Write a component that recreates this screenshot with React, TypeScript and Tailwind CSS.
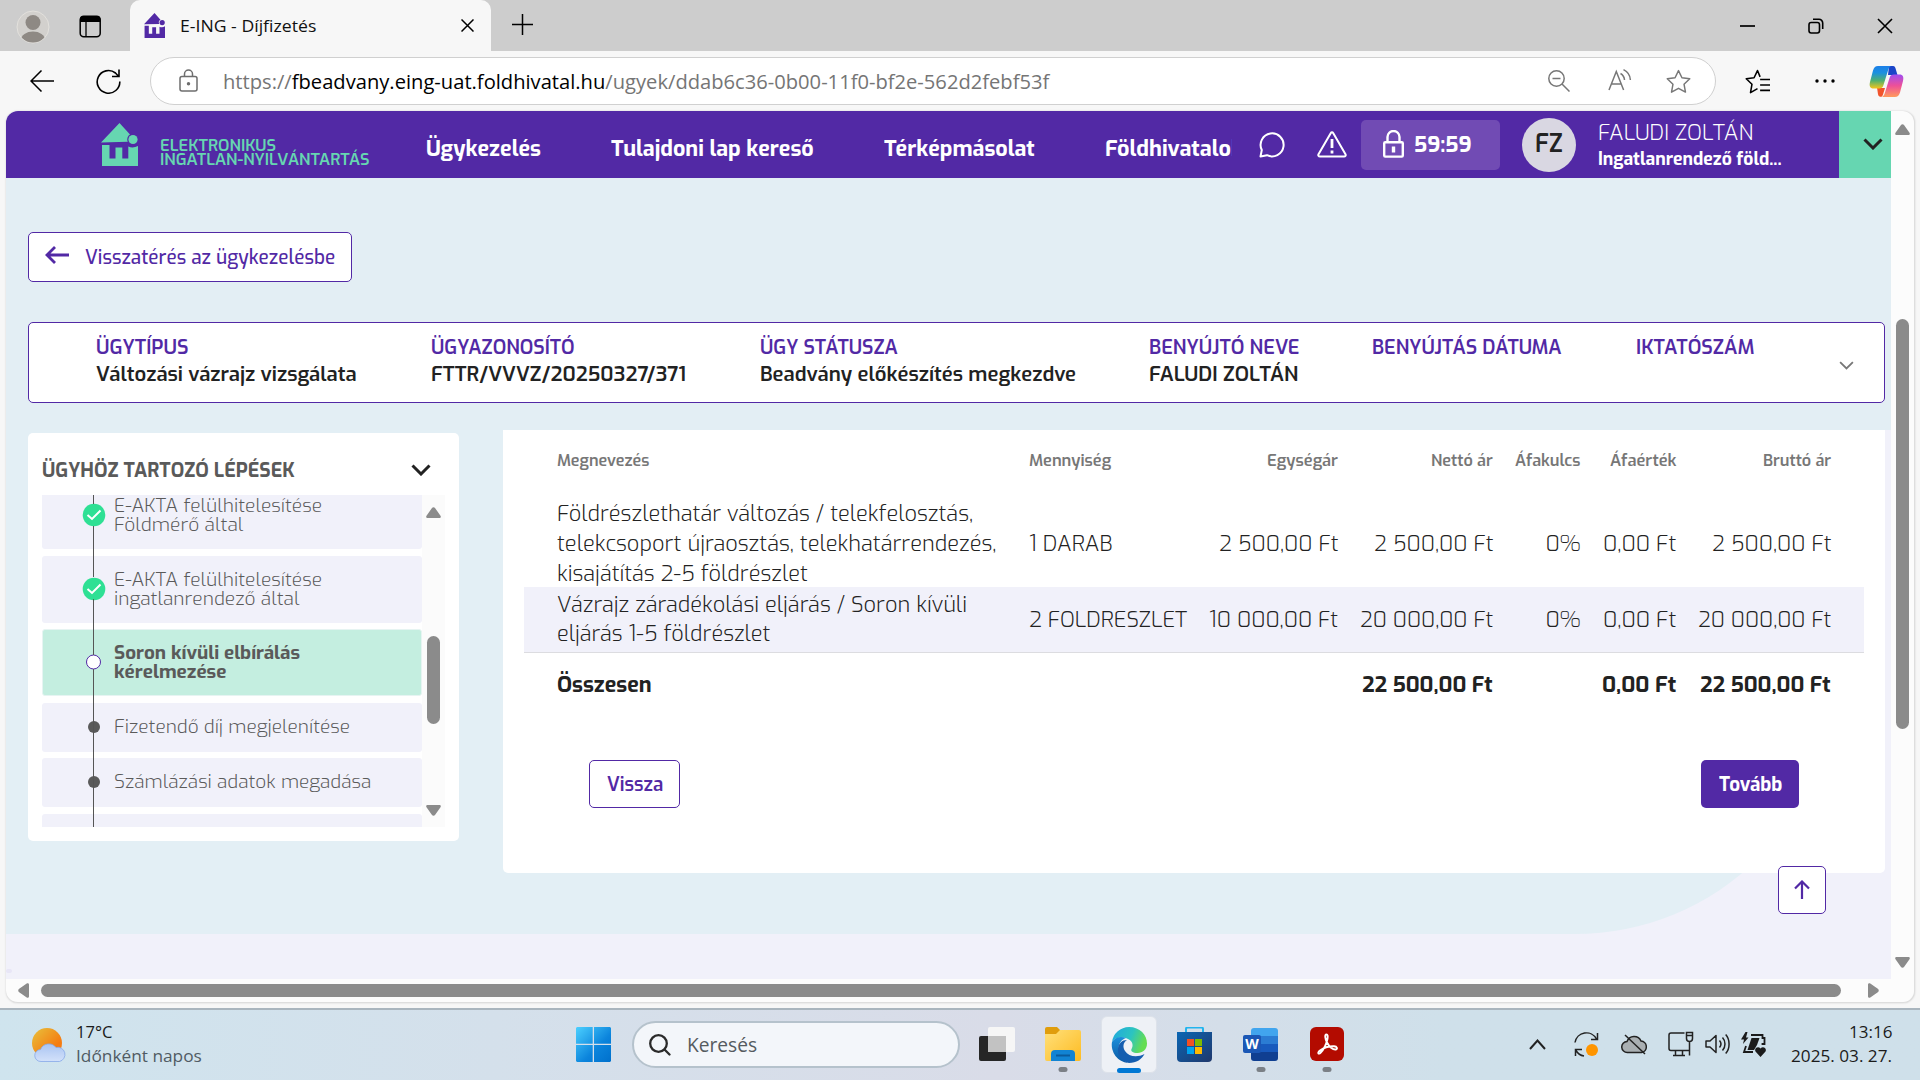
import { useLayoutEffect, useRef, useState } from "react";
import type { ReactNode } from "react";

/* Condenses or widens a line of text so that it fills the width of its box. */
function Fit({ className, children }: { className: string; children: ReactNode }) {
  const outer = useRef<HTMLSpanElement>(null);
  const inner = useRef<HTMLSpanElement>(null);
  const [scale, setScale] = useState(1);
  useLayoutEffect(() => {
    if (outer.current && inner.current) {
      setScale(outer.current.clientWidth / inner.current.offsetWidth);
    }
  }, []);
  return (
    <span ref={outer} className={`block shrink-0 whitespace-nowrap ${className}`}>
      <span ref={inner} className="inline-block origin-left align-top" style={{ transform: `scaleX(${scale})` }}>
        {children}
      </span>
    </span>
  );
}

function HouseLogo({ className }: { className: string }) {
  return (
    <svg className={className} viewBox="0 0 37 43" fill="currentColor" preserveAspectRatio="none">
      <path d="M0 19.500 18.500 0 29 11.500a5.600 5.600 0 0 0-2.200 7.300L0 19.500Z" />
      <circle cx="32" cy="16.500" r="4.600" />
      <path d="M1 22h7.500v13.500h6V24.500h6.800v11h6V23.500c3 1.500 6.500 1.200 9.700-.5V43H1Z" />
    </svg>
  );
}

function Chevron({ className, width = 2 }: { className: string; width?: number }) {
  return (
    <svg className={className} viewBox="0 0 20 12" fill="none" stroke="currentColor" strokeWidth={width}>
      <path d="m1.500 1.500 8.500 8.500 8.500-8.500" />
    </svg>
  );
}

function TabStrip() {
  return (
    <div className="flex h-[51px] shrink-0 bg-[#cdcdcd]">
      <div className="flex w-[130px] items-center pl-4">
        <svg className="mt-0.5 size-[34px]" viewBox="0 0 34 34">
          <defs>
            <clipPath id="face"><circle cx="17" cy="17" r="15.500" /></clipPath>
          </defs>
          <circle cx="17" cy="17" r="16" fill="#d2d0cd" stroke="#e3e1dd" />
          <g clipPath="url(#face)" fill="#8e8984">
            <circle cx="17" cy="12.500" r="7.500" />
            <ellipse cx="17" cy="30" rx="12" ry="8.500" />
          </g>
        </svg>
        <svg className="ml-[29px] mt-px h-[23px] w-[23px]" viewBox="0 0 23 23">
          <rect x="1.200" y="1.200" width="20" height="20.500" rx="3.500" fill="none" stroke="#000" strokeWidth="1.500" />
          <path d="M1 7V4a3 3 0 0 1 3-3h14.500a3 3 0 0 1 3 3v3Z" />
          <path d="M7 7v14" stroke="#000" strokeWidth="1.300" />
        </svg>
      </div>
      <div className="flex w-[361px] items-center rounded-t-[10px] bg-[#f7f7f7] pl-3.5">
        <HouseLogo className="h-[25px] w-[21px] text-[#5229a5]" />
        <Fit className="ml-[15px] w-[136px] text-[17px] leading-6 text-[#111]">E-ING - Díjfizetés</Fit>
        <svg className="ml-[145px] size-[13px]" viewBox="0 0 13 13" stroke="#000" strokeWidth="1.500">
          <path d="m.500.500 12 12M12.500.500l-12 12" />
        </svg>
      </div>
      <svg className="ml-[21px] mt-[14px] size-[21px]" viewBox="0 0 21 21" stroke="#000" strokeWidth="1.500">
        <path d="M10.500 0v21M0 10.500h21" />
      </svg>
      <div className="ml-auto flex items-center gap-[53px] pr-[27px]">
        <svg className="size-4" viewBox="0 0 16 16" stroke="#000" strokeWidth="1.700"><path d="M1 8h15" /></svg>
        <svg className="size-4" viewBox="0 0 16 16" fill="none" stroke="#000" strokeWidth="1.600">
          <rect x="1" y="4.500" width="10.500" height="10.500" rx="2.200" />
          <path d="M5 1.300h6a3.700 3.700 0 0 1 3.700 3.700v6" />
        </svg>
        <svg className="size-4" viewBox="0 0 16 16" stroke="#000" strokeWidth="1.600"><path d="m1 1 14 14M15 1 1 15" /></svg>
      </div>
    </div>
  );
}

const STAR = "m12 1.500 3.300 6.900 7.500 1-5.500 5.200 1.400 7.600-6.700-3.700-6.700 3.700 1.400-7.600L1.200 9.400l7.500-1Z";

function Toolbar() {
  return (
    <div className="flex h-[60px] shrink-0 items-center bg-[#f7f7f7]">
      <svg className="ml-[30px] h-[22px] w-6" viewBox="0 0 24 22" fill="none" stroke="#000" strokeWidth="1.500">
        <path d="M11.500.500 1 11l10.500 10.500M1 11h23" />
      </svg>
      <svg className="ml-[42px] size-[25px]" viewBox="0 0 25 25" fill="none" stroke="#000" strokeWidth="1.600">
        <path d="M23.800 12.500A11.300 11.300 0 1 1 19.500 4L22.500 7.200M23 .5v7h-7" />
      </svg>
      <div className="ml-[29px] flex h-12 w-[1566px] items-center rounded-full border-[1.500px] border-[#d0d0d0] bg-white text-[#757575]">
        <svg className="-mt-0.5 ml-7 h-[23px] w-[19px]" viewBox="0 0 19 23" fill="none" stroke="#6e6e6e" strokeWidth="1.500">
          <rect x="1" y="7.500" width="17" height="14.500" rx="2" />
          <path d="M5.500 7.500V5a4 4 0 0 1 8 0v2.500" />
          <circle cx="9.500" cy="14.700" r="1" fill="#6e6e6e" />
        </svg>
        <Fit className="ml-[25px] mt-0.5 w-[826px] text-[20px] leading-7">
          https://<span className="text-black">fbeadvany.eing-uat.foldhivatal.hu</span>/ugyek/ddab6c36-0b00-11f0-bf2e-562d2febf53f
        </Fit>
        <svg className="ml-[499px] size-[22px]" viewBox="0 0 22 22" fill="none" stroke="#777" strokeWidth="1.500">
          <circle cx="8.500" cy="8.500" r="7.700" />
          <path d="m14 14 7.500 7.500M4.500 8.500h8" />
        </svg>
        <svg className="ml-[38px] -mt-0.5 h-[22px] w-6" viewBox="0 0 24 22" fill="none" stroke="#777" strokeWidth="1.500">
          <path d="M1 21 8.300 2.500 15.600 21M3.500 15h9.600M12.500 4.500c2.200 1.200 3.800 3.700 4 6.500M15.500.700c4 2 6.700 6 6.900 10.300" />
        </svg>
        <svg className="ml-[34px] size-[25px]" viewBox="0 0 24 24" fill="none" stroke="#777" strokeWidth="1.400" strokeLinejoin="round">
          <path d={STAR} />
        </svg>
      </div>
      <svg className="ml-[29px] size-[25px]" viewBox="0 0 24 24" fill="none" stroke="#000" strokeWidth="1.500" strokeLinejoin="round">
        <path d="M14.500 7.600 12 1.500 8.700 8.400l-7.500 1 5.500 5.200-1.400 8.100 6.700-3.900M14.500 10H24M14.500 15.300H24M14.500 20.500H24" />
      </svg>
      <svg className="ml-[44px] h-1.5 w-[22px]" viewBox="0 0 22 6"><circle cx="3" cy="3" r="1.700" /><circle cx="11" cy="3" r="1.700" /><circle cx="19" cy="3" r="1.700" /></svg>
      <svg className="ml-[33px] h-[31px] w-[35px]" viewBox="0 0 35 31">
        <defs>
          <linearGradient id="cp1" x1="0" y1="0" x2="0" y2="1"><stop offset="0" stopColor="#1d7fe8" /><stop offset=".3" stopColor="#1a90e0" /><stop offset=".65" stopColor="#4fb070" /><stop offset="1" stopColor="#f5c51a" /></linearGradient>
          <linearGradient id="cp2" x1="0" y1="0" x2="0" y2="1"><stop offset="0" stopColor="#a04df0" /><stop offset=".5" stopColor="#ee5098" /><stop offset="1" stopColor="#ff9b5c" /></linearGradient>
        </defs>
        <path d="M20 0h4c2 0 2.500 2 3 4l1.500 5H19Z" fill="#1b45c8" />
        <path d="M8 22h8l-2 6.500C13.300 31 12 31 10.500 30.500 8.500 29.700 9 26 8 22Z" fill="#f2542c" />
        <path d="M9 0h13c-2 1-2.600 3-3.300 5.500L14.500 19c-.8 2.600-2 3.500-4.500 3.500H4.500C1 22.500 0 20 1 16L4 4.500C5 1.300 6.500 0 9 0Z" fill="url(#cp1)" />
        <path d="M26 31H13c2-1 2.600-3 3.300-5.500L20.500 12c.8-2.600 2-3.500 4.500-3.500h5.500c3.500 0 4.500 2.500 3.500 6.500L31 26.500c-1 3.200-2.500 4.500-5 4.500Z" fill="url(#cp2)" />
      </svg>
    </div>
  );
}

function SiteHeader() {
  return (
    <div className="flex h-[67px] items-center bg-[#5229a5] text-white">
      <HouseLogo className="ml-[95px] h-[43px] w-[37px] text-[#66d6b1]" />
      <div className="ml-[22px] mt-[14px] text-[16.500px] font-semibold leading-[14px] text-[#66d6b1]">
        <Fit className="w-[116px]">ELEKTRONIKUS</Fit>
        <Fit className="w-[210px]">INGATLAN-NYILVÁNTARTÁS</Fit>
      </div>
      <div className="ml-[56px] mt-[9px] flex w-[806px] overflow-hidden text-[22px] font-bold leading-8">
        <Fit className="w-[115px]">Ügykezelés</Fit>
        <Fit className="ml-[70px] w-[203px]">Tulajdoni lap kereső</Fit>
        <Fit className="ml-[70px] w-[151px]">Térképmásolat</Fit>
        <Fit className="ml-[70px] w-[138px]">Földhivatalok</Fit>
      </div>
      <svg className="ml-[27px] size-[27px]" viewBox="0 0 27 27" fill="none" stroke="currentColor" strokeWidth="2" strokeLinejoin="round">
        <path d="M1.500 25.500 2.800 19A11.500 11.500 0 1 1 8 24.200Z" />
      </svg>
      <svg className="ml-[31px] h-[27px] w-[30px]" viewBox="0 0 30 27" fill="none" stroke="currentColor" strokeWidth="2" strokeLinejoin="round">
        <path d="M13.700 2.200 1.500 23.200c-.6 1.200 0 2.300 1.500 2.300h24c1.500 0 2.100-1.100 1.500-2.300L16.300 2.200c-.7-1.200-1.900-1.200-2.600 0Z" />
        <path d="M15 8v9M15 19.500v3" strokeWidth="2.800" />
      </svg>
      <div className="ml-[14px] flex h-[50px] w-[139px] items-center rounded-[5px] bg-[#714bb4] pl-[22px]">
        <svg className="-mt-px h-[28px] w-[21px]" viewBox="0 0 21 28" fill="none" stroke="currentColor" strokeWidth="2.400">
          <rect x="1.200" y="12.200" width="18.600" height="14.400" rx="1" />
          <path d="M4.500 12V7a6 6 0 0 1 12 0v5" />
          <path d="M10.500 16.500v6" strokeWidth="3.400" />
        </svg>
        <Fit className="ml-[10px] w-[58px] text-[22px] font-bold leading-8">59:59</Fit>
      </div>
      <div className="ml-[22px] flex size-[54px] items-center justify-center rounded-full bg-[#d9d7e2] text-[#222]">
        <Fit className="-mt-px w-[28px] text-[25px] font-semibold leading-8">FZ</Fit>
      </div>
      <div className="ml-[22px] mt-0.5 flex w-[241px] flex-col">
        <Fit className="w-[155px] text-[21.800px] font-[350] leading-[26px]">FALUDI ZOLTÁN</Fit>
        <Fit className="w-[184px] text-[18px] font-bold leading-[26px]">Ingatlanrendező föld...</Fit>
      </div>
      <div className="flex h-full w-[52px] items-center justify-center bg-[#66d6b1] pl-[15px] text-[#222]">
        <Chevron className="-mt-0.5 h-3 w-5" width={3} />
      </div>
    </div>
  );
}

type InfoItem = { label: string; value?: string; col: string; labelWidth: string; valueWidth: string };

const INFO: InfoItem[] = [
  { label: "ÜGYTÍPUS", value: "Változási vázrajz vizsgálata", col: "w-[335px]", labelWidth: "w-[92px]", valueWidth: "w-[261px]" },
  { label: "ÜGYAZONOSÍTÓ", value: "FTTR/VVVZ/20250327/371", col: "w-[329px]", labelWidth: "w-[144px]", valueWidth: "w-[255px]" },
  { label: "ÜGY STÁTUSZA", value: "Beadvány előkészítés megkezdve", col: "w-[389px]", labelWidth: "w-[138px]", valueWidth: "w-[316px]" },
  { label: "BENYÚJTÓ NEVE", value: "FALUDI ZOLTÁN", col: "w-[223px]", labelWidth: "w-[150px]", valueWidth: "w-[149px]" },
  { label: "BENYÚJTÁS DÁTUMA", col: "w-[264px]", labelWidth: "w-[190px]", valueWidth: "" },
  { label: "IKTATÓSZÁM", col: "w-[203px]", labelWidth: "w-[118px]", valueWidth: "" },
];

function InfoBar() {
  return (
    <div className="ml-[22px] mt-10 flex h-[81px] w-[1857px] rounded-[5px] border border-[#5229a5] bg-white pl-[67px] pt-[11px]">
      {INFO.map((item) => (
        <div key={item.label} className={`shrink-0 ${item.col}`}>
          <Fit className={`text-[19.500px] font-semibold leading-[26px] text-[#5229a5] ${item.labelWidth}`}>{item.label}</Fit>
          {item.value && (
            <Fit className={`mt-px text-[20.400px] font-semibold leading-[27px] text-[#222] ${item.valueWidth}`}>{item.value}</Fit>
          )}
        </div>
      ))}
      <Chevron className="mt-[27px] h-[9px] w-[15px] text-[#777]" width={2.4} />
    </div>
  );
}

function ArrowHead({ className }: { className: string }) {
  return (
    <svg className={className} viewBox="0 0 15 11" fill="#8b8b8b">
      <path d="M5.800 1.200 .5 8.700C-.2 9.900.300 11 1.700 11h11.600c1.400 0 1.900-1.100 1.200-2.300L9.200 1.200c-.9-1.300-2.500-1.300-3.400 0Z" />
    </svg>
  );
}

type Step = { state: "done" | "current" | "todo"; box: string; lines: { text: string; width: string }[] };

const STEPS: Step[] = [
  {
    state: "done",
    box: "h-[67px] -mt-[13px] bg-[#f1f1fa]",
    lines: [
      { text: "E-AKTA felülhitelesítése", width: "w-[208px]" },
      { text: "Földmérő által", width: "w-[129px]" },
    ],
  },
  {
    state: "done",
    box: "h-[67px] mt-[7px] bg-[#f1f1fa]",
    lines: [
      { text: "E-AKTA felülhitelesítése", width: "w-[208px]" },
      { text: "ingatlanrendező által", width: "w-[185px]" },
    ],
  },
  {
    state: "current",
    box: "h-[67px] mt-[6px] border border-[#e6f4f2] bg-[#c4eee0]",
    lines: [
      { text: "Soron kívüli elbírálás", width: "w-[186px]" },
      { text: "kérelmezése", width: "w-[112px]" },
    ],
  },
  { state: "todo", box: "h-[49px] mt-[7px] bg-[#f1f1fa]", lines: [{ text: "Fizetendő díj megjelenítése", width: "w-[236px]" }] },
  { state: "todo", box: "h-[49px] mt-[6px] bg-[#f1f1fa]", lines: [{ text: "Számlázási adatok megadása", width: "w-[257px]" }] },
];

function StepMark({ state }: { state: Step["state"] }) {
  return (
    <svg className="-mt-px size-6 shrink-0" viewBox="0 0 24 24">
      {state === "done" && (
        <>
          <circle cx="12" cy="12" r="11.300" fill="#2ee094" />
          <path d="m5.500 12 4.500 4 8.500-8.500" fill="none" stroke="#fff" strokeWidth="2" />
        </>
      )}
      {state === "current" && <circle cx="10.500" cy="12" r="7" fill="#fff" stroke="#5229a5" />}
      {state === "todo" && <circle cx="12" cy="12" r="6" fill="#5a5a5a" />}
    </svg>
  );
}

function Sidebar() {
  return (
    <div className="ml-[22px] mt-[3px] h-[408px] w-[431px] shrink-0 rounded-[5px] bg-white pl-[14px] pt-[29px]">
      <div className="flex h-[33px]">
        <Fit className="-mt-1.5 w-[253px] text-[19.300px] font-bold leading-[30px] text-[#5a5a5a]">ÜGYHÖZ TARTOZÓ LÉPÉSEK</Fit>
        <Chevron className="ml-[116px] mt-0.5 h-3 w-5 text-[#222]" width={3} />
      </div>
      <div className="flex h-[332px] w-[403px] overflow-hidden">
        <div className="relative w-[380px]">
          {STEPS.map((step, i) => (
            <div key={i} className={`flex items-center rounded-[3px] pl-10 ${step.box}`}>
              <StepMark state={step.state} />
              <div
                className={`-mt-[2px] text-[19px] leading-[19px] text-[#5a5a5a] ${
                  step.state === "current" ? "ml-[7px] font-bold" : "ml-2 font-[350]"
                }`}
              >
                {step.lines.map((line) => (
                  <Fit key={line.text} className={line.width}>{line.text}</Fit>
                ))}
              </div>
            </div>
          ))}
          <div className="mt-[7px] h-[30px] rounded-[3px] bg-[#f1f1fa]" />
          {/* Connecting line between the step marks */}
          <div className="absolute left-[51px] top-[-13px] h-[22px] w-px bg-[#555]" />
          <div className="absolute left-[51px] top-[31px] h-[51px] w-px bg-[#555]" />
          <div className="absolute left-[51px] top-[104px] h-[56px] w-px bg-[#555]" />
          <div className="absolute left-[51px] top-[174px] h-[161px] w-px bg-[#555]" />
        </div>
        <div className="flex w-[23px] flex-col items-center bg-[#fbfbfb] pt-3">
          <ArrowHead className="h-[11px] w-[15px]" />
          <div className="mt-[118px] h-[88px] w-[13px] rounded-full bg-[#8b8b8b]" />
          <ArrowHead className="mt-[81px] h-[11px] w-[15px] rotate-180" />
        </div>
      </div>
    </div>
  );
}

const COLS = "grid grid-cols-[472px_180px_128.5px_155.5px_87.5px_95.5px_155px] pl-[33px]";

const HEADS = [
  { text: "Megnevezés", cls: "w-[92px]" },
  { text: "Mennyiség", cls: "w-[82px]" },
  { text: "Egységár", cls: "w-[71px] ml-auto" },
  { text: "Nettó ár", cls: "w-[62px] ml-auto" },
  { text: "Áfakulcs", cls: "w-[66px] ml-auto" },
  { text: "Áfaérték", cls: "w-[66px] ml-auto" },
  { text: "Bruttó ár", cls: "w-[68px] ml-auto" },
];

function FeeTable() {
  return (
    <div className="w-[1340px] text-[21.800px] font-[350] leading-[30px] text-[#222]">
      <div className={`${COLS} h-[67px] pt-[17px] text-[16px] font-semibold leading-7 text-[#777]`}>
        {HEADS.map((h) => (
          <Fit key={h.text} className={h.cls}>{h.text}</Fit>
        ))}
      </div>
      <div className={`${COLS} h-[90px] items-center pt-0.5`}>
        <div>
          <Fit className="w-[416px]">Földrészlethatár változás / telekfelosztás,</Fit>
          <Fit className="w-[439px]">telekcsoport újraosztás, telekhatárrendezés,</Fit>
          <Fit className="w-[251px]">kisajátítás 2-5 földrészlet</Fit>
        </div>
        <Fit className="w-[83px]">1 DARAB</Fit>
        <Fit className="ml-auto w-[119px]">2 500,00 Ft</Fit>
        <Fit className="ml-auto w-[119px]">2 500,00 Ft</Fit>
        <Fit className="ml-auto w-[35px]">0%</Fit>
        <Fit className="ml-auto w-[73px]">0,00 Ft</Fit>
        <Fit className="ml-auto w-[119px]">2 500,00 Ft</Fit>
      </div>
      <div className={`${COLS} h-[66px] items-center border-b border-[#dcdce0] bg-[#f1f1fa]`}>
        <div className="-mt-0.5 leading-[29px]">
          <Fit className="w-[410px]">Vázrajz záradékolási eljárás / Soron kívüli</Fit>
          <Fit className="w-[213px]">eljárás 1-5 földrészlet</Fit>
        </div>
        <Fit className="w-[158px]">2 FOLDRESZLET</Fit>
        <Fit className="ml-auto w-[129px]">10 000,00 Ft</Fit>
        <Fit className="ml-auto w-[133px]">20 000,00 Ft</Fit>
        <Fit className="ml-auto w-[35px]">0%</Fit>
        <Fit className="ml-auto w-[73px]">0,00 Ft</Fit>
        <Fit className="ml-auto w-[133px]">20 000,00 Ft</Fit>
      </div>
      <div className={`${COLS} h-[62px] items-center pt-0.5 font-bold`}>
        <Fit className="w-[95px]">Összesen</Fit>
        <span />
        <span />
        <Fit className="ml-auto w-[131px]">22 500,00 Ft</Fit>
        <span />
        <Fit className="ml-auto w-[74px]">0,00 Ft</Fit>
        <Fit className="ml-auto w-[131px]">22 500,00 Ft</Fit>
      </div>
    </div>
  );
}

function MainCard() {
  return (
    <div className="ml-[44px] h-[443px] w-[1382px] shrink-0 rounded-b-[5px] bg-white pl-[21px]">
      <FeeTable />
      <div className="mt-[45px] flex justify-between pl-[65px] pr-[86px] text-[19.500px] leading-[30px]">
        <div className="flex h-12 w-[91px] items-center justify-center rounded-[5px] border border-[#5229a5] font-semibold text-[#5229a5]">
          <Fit className="-mt-px w-[56px]">Vissza</Fit>
        </div>
        <div className="flex h-12 w-[98px] items-center justify-center rounded-[5px] bg-[#5229a5] font-bold text-white">
          <Fit className="-mt-px w-[63px]">Tovább</Fit>
        </div>
      </div>
    </div>
  );
}

function Page() {
  return (
    <div className="relative isolate h-[868px] w-[1885px] overflow-hidden bg-[#f1f1fa] font-['Exo','Exo_2',Roboto,sans-serif]">
      {/* Tinted backdrop with a rounded lower corner */}
      <div className="absolute left-0 top-0 -z-10 h-[319px] w-full bg-[#e3eef4]" />
      <div className="absolute left-0 top-[319px] -z-10 h-[504px] w-[1829px] rounded-br-[260px] bg-[#e3eff5]" />
      <SiteHeader />
      <div className="ml-[22px] mt-[54px] flex h-[50px] w-[324px] items-center rounded-[5px] border border-[#5229a5] bg-white text-[#5229a5]">
        <svg className="-mt-1 ml-4 h-[18px] w-6" viewBox="0 0 24 18" fill="none" stroke="currentColor" strokeWidth="2.800">
          <path d="M10 1 2 9l8 8M2 9h22" />
        </svg>
        <Fit className="-mt-px ml-4 w-[250px] text-[19.500px] font-medium leading-7">Visszatérés az ügykezelésbe</Fit>
      </div>
      <InfoBar />
      <div className="mt-[27px] flex items-start">
        <Sidebar />
        <MainCard />
      </div>
      <div className="absolute left-[1772px] top-[755px] flex size-12 items-center justify-center rounded-[5px] border border-[#5229a5] bg-white">
        <svg className="-mt-0.5 h-[19px] w-4" viewBox="0 0 16 19" fill="none" stroke="#5229a5" strokeWidth="2.200">
          <path d="m1 8.500 7-7 7 7M8 2v17" />
        </svg>
      </div>
      <div className="absolute left-0 top-[858px] h-1 w-1.5 rounded bg-[#e8e6f6]" />
    </div>
  );
}

function Viewport() {
  return (
    <div className="ml-[6px] h-[892px] w-[1909px] overflow-hidden rounded-[12px] border-b border-r border-[#dedede] bg-[#fcfcfc] shadow-[0_0_2px_#ccc]">
      <div className="flex">
        <Page />
        <div className="flex w-[23px] flex-col items-center pt-[13px]">
          <ArrowHead className="h-[11px] w-[15px]" />
          <div className="mt-[184px] h-[410px] w-[13px] rounded-full bg-[#8b8b8b]" />
          <ArrowHead className="mt-[228px] h-[11px] w-[15px] rotate-180" />
        </div>
      </div>
      <div className="flex h-[23px] items-center pl-2.5">
        <ArrowHead className="h-[11px] w-[15px] -rotate-90" />
        <div className="ml-2.5 h-[13px] w-[1800px] rounded-full bg-[#8b8b8b]" />
        <ArrowHead className="ml-[25px] h-[11px] w-[15px] rotate-90" />
      </div>
    </div>
  );
}

function RunDot() {
  return <div className="absolute -bottom-[11px] left-1/2 h-[5px] w-[9px] -translate-x-1/2 rounded-full bg-[#7b8086]" />;
}

function Taskbar() {
  return (
    <div className="flex h-[72px] shrink-0 items-center border-t-2 border-[#a9b5be] bg-linear-to-r from-[#cfe4ee] via-[#d9dce8] via-52% to-[#cfe0ea] to-75% text-[#1b1b1b]">
      <svg className="ml-8 h-[34px] w-[34px]" viewBox="0 0 34 34">
        <defs>
          <linearGradient id="sun" x1="0" y1="0" x2="1" y2="1"><stop offset="0" stopColor="#e8c23c" /><stop offset=".7" stopColor="#f57c12" /></linearGradient>
          <linearGradient id="cl" x1="0" y1="0" x2="0" y2="1"><stop offset="0" stopColor="#a9c4f2" /><stop offset="1" stopColor="#d3e1fa" /></linearGradient>
        </defs>
        <circle cx="15" cy="15" r="15" fill="url(#sun)" />
        <path d="M9 33.500a6 6 0 0 1-.5-12 9 9 0 0 1 15.500-2 7 7 0 1 1 3.500 14Z" fill="url(#cl)" stroke="#86a8e8" strokeWidth=".8" />
      </svg>
      <div className="-mt-0.5 ml-2.5 text-[17px] leading-6">
        <Fit className="w-[36px]">17°C</Fit>
        <Fit className="w-[126px] text-[#505b63]">Időnként napos</Fit>
      </div>
      <svg className="-mt-px ml-[374px] size-[35px]" viewBox="0 0 35 35">
        <defs><linearGradient id="win" gradientUnits="userSpaceOnUse" x1="0" y1="0" x2="35" y2="35"><stop offset="0" stopColor="#4cd0ff" /><stop offset=".6" stopColor="#0b84dc" /><stop offset="1" stopColor="#0070cc" /></linearGradient></defs>
        <path d="M1 0h15.700v16.700H0V1ZM18 0h16l1 1v15.700H18ZM0 18h16.700v17H1l-1-1ZM18 18h17v16l-1 1H18Z" fill="url(#win)" />
      </svg>
      <div className="-mt-px ml-[21px] flex h-[47px] w-[328px] items-center rounded-full border-2 border-[#b5c2cc] bg-[#f3f6fa]">
        <svg className="ml-[15px] size-[22px]" viewBox="0 0 22 22" fill="none" stroke="#2a2a2a" strokeWidth="2.300" strokeLinecap="round">
          <circle cx="9.500" cy="9.500" r="8.300" /><path d="m15.500 15.500 5 5" />
        </svg>
        <Fit className="ml-[16px] w-[70px] text-[20px] leading-7 text-[#555b60]">Keresés</Fit>
      </div>
      <svg className="-mt-0.5 ml-[19px] h-[35px] w-9" viewBox="0 0 36 35">
        <rect x="0" y="9" width="27" height="25" rx="2" fill="#262626" />
        <rect x="9" y="0" width="27" height="25" rx="2" fill="#f6f6f6" />
        <path d="M9 9h18v16H9Z" fill="#c2c2c2" />
      </svg>
      <div className="relative -mt-0.5 ml-[30px]">
        <svg className="h-[34px] w-9" viewBox="0 0 36 34">
          <defs><linearGradient id="fol" x1="0" y1="0" x2="1" y2="1"><stop offset="0" stopColor="#ffe07a" /><stop offset="1" stopColor="#fdbb22" /></linearGradient></defs>
          <path d="M0 2a2 2 0 0 1 2-2h10l4 4-4 4H0Z" fill="#e09d0c" />
          <path d="M0 7h11l4-4h19a2 2 0 0 1 2 2v27a2 2 0 0 1-2 2H2a2 2 0 0 1-2-2Z" fill="url(#fol)" />
          <path d="M6 34V27a4 4 0 0 1 4-4h16a4 4 0 0 1 4 4v7Z" fill="#1183d3" />
          <path d="M11 28.500h14" stroke="#0b5a9c" strokeWidth="2" />
        </svg>
        <RunDot />
      </div>
      <div className="relative -mt-px ml-5 flex h-[57px] w-14 items-center justify-center rounded-md border border-[#dde2ea] bg-[#eef1f6]">
        <svg className="size-9" viewBox="0 0 36 36">
          <defs>
            <linearGradient id="e1" x1="0" y1="0" x2="1" y2=".3"><stop offset="0" stopColor="#1fa6e0" /><stop offset=".6" stopColor="#2cc4c0" /><stop offset="1" stopColor="#64dd52" /></linearGradient>
            <linearGradient id="e2" x1="0" y1="0" x2="0" y2="1"><stop offset="0" stopColor="#1b8fdc" /><stop offset="1" stopColor="#0c59a4" /></linearGradient>
          </defs>
          <path d="M1 15A17.500 17.500 0 0 1 18 0c11 0 18 8 18 16.500 0 6-4.500 9.500-9.500 9.500-5 0-7-2-6-4 1.700-2.500 2-7.500-3.500-10C10.500 9 3 11 1 15Z" fill="url(#e1)" />
          <path d="M1 15c3-5 9-6 14-4-5 1.500-7.500 6-7.500 11 0 6 3.500 11 9.500 13.900A18 18 0 0 1 1 15Z" fill="url(#e2)" />
          <path d="M16 13c-4 2.500-4.500 7-2 11 3.500 5.500 12 7 19.500 3C31 32 25.500 36 18 36 10.500 35 6 28 7 21c.8-4.500 4-8 9-8Z" fill="#155eb0" />
        </svg>
        <div className="absolute bottom-[-1px] h-[5px] w-6 rounded-full bg-[#0078d4]" />
      </div>
      <svg className="-mt-px ml-5 size-[35px]" viewBox="0 0 35 35">
        <defs><linearGradient id="st" x1="0" y1="0" x2="1" y2="1"><stop offset="0" stopColor="#0a66b4" /><stop offset="1" stopColor="#20386c" /></linearGradient></defs>
        <path d="M9 8V2a1.500 1.500 0 0 1 1.500-1.500h14A1.500 1.500 0 0 1 26 2v6" fill="none" stroke="#22b4ee" strokeWidth="2" />
        <path d="M0 5h35v26a4 4 0 0 1-4 4H4a4 4 0 0 1-4-4Z" fill="url(#st)" />
        <path d="M10 12h7v7h-7Z" fill="#f25022" /><path d="M18 12h7v7h-7Z" fill="#7fba00" />
        <path d="M10 20h7v7h-7Z" fill="#00a4ef" /><path d="M18 20h7v7h-7Z" fill="#ffb900" />
      </svg>
      <div className="relative -mt-0.5 ml-[31px] flex h-[33px] w-[35px] items-center">
        <div className="ml-2 h-full w-[27px] overflow-hidden rounded-[3px]">
          <div className="h-1/4 bg-[#41a5ee]" /><div className="h-1/4 bg-[#2b7cd3]" />
          <div className="h-1/4 bg-[#185abd]" /><div className="h-1/4 bg-[#103f91]" />
        </div>
        <div className="absolute left-0 top-[7px] flex h-[18px] w-[18px] items-center justify-center rounded-[2px] bg-[#1b57b5] text-[14px] font-bold leading-none text-white">W</div>
        <RunDot />
      </div>
      <div className="relative -mt-0.5 ml-8 flex size-[34px] items-center justify-center rounded-[6px] bg-[#b30b00]">
        <svg className="size-[24px]" viewBox="0 0 24 24" fill="none" stroke="#fff" strokeWidth="1.900">
          <path d="M11.500 2.500c-2 0-1.500 4 .5 8s6 7.500 8.800 7c2-.5 1.500-3-1.800-3.200-5-.2-10.500 1.700-14 4.200-3 2.500-1.500 4.300.5 2.300 3-3 6-9.300 7-14 .5-2.800 0-4.300-1-4.300Z" />
        </svg>
        <RunDot />
      </div>
      <div className="-mt-0.5 ml-auto flex items-center pr-[28px]">
        <svg className="mr-[28px] h-[11px] w-[17px]" viewBox="0 0 17 11" fill="none" stroke="#222" strokeWidth="2"><path d="m1 10 7.500-8.500L16 10" /></svg>
        <svg className="mr-[22px] size-[25px]" viewBox="0 0 25 25" fill="none" stroke="#222" strokeWidth="1.500">
          <path d="M1 10.500A11.500 11.500 0 0 1 22.500 7M23.500 1v6.500H17M2 18.500A11.500 11.500 0 0 0 10 24M1.500 24v-6.500H8" />
          <circle cx="18" cy="18" r="6" fill="#ff9500" stroke="none" />
        </svg>
        <svg className="mr-[21px] h-[21px] w-[26px]" viewBox="0 0 26 21" fill="#a9afb2" stroke="#222" strokeWidth="1.500">
          <path d="M6.500 18.500a5.500 5.500 0 0 1-.5-11 7.500 7.500 0 0 1 14-.5 5.800 5.800 0 0 1 .5 11.500Z" /><path d="m4 1 20 19" />
        </svg>
        <svg className="mr-[11px] size-[26px]" viewBox="0 0 26 26" fill="none" stroke="#222" strokeWidth="1.500">
          <path d="M16.500 2H3a2 2 0 0 0-2 2v13.500a2 2 0 0 0 2 2h18M7.500 19.500v5M14.500 19.500v5M5 24.500h12M18.500 1.500h6v6a3 3 0 0 1-6 0ZM21.500 10.500v14M18.500 4.500h6" />
        </svg>
        <svg className="mr-[11px] h-[22px] w-[25px]" viewBox="0 0 25 22" fill="none" stroke="#222" strokeWidth="1.500" strokeLinejoin="round">
          <path d="M1 8v6h4l6 5.500v-17L5 8ZM14.500 7.500c1.700 2 1.700 5 0 7M17.500 4.500c3.300 3.500 3.300 9.500 0 13M20.700 1.500c4.500 5 4.500 14 0 19" />
        </svg>
        <svg className="mr-[24px] h-[25px] w-[26px]" viewBox="0 0 26 25" fill="#1b1b1b">
          <path d="M4.500 0 0 7.500h3L2 12l5.500-6.500H5L6.500 0Z" />
          <path d="M10 3h11.500v3h2v6h-2v1M5 14l-2 6h9" fill="none" stroke="#1b1b1b" strokeWidth="1.800" />
          <path d="M10.500 6h8l-2.500 7-3 5H6.500Z" />
          <path d="m19.500 25-5-5.500c-1.700-3 2.500-6 5-3 2.500-3 6.700 0 5 3Z" />
        </svg>
        <div className="flex flex-col items-end text-[17px] leading-6">
          <Fit className="w-[43px]">13:16</Fit>
          <Fit className="w-[101px]">2025. 03. 27.</Fit>
        </div>
      </div>
    </div>
  );
}

export default function App() {
  return (
    <div className="flex h-[1080px] w-[1920px] flex-col overflow-hidden bg-[#f7f7f7] font-['Segoe_UI','Open_Sans',sans-serif]">
      <TabStrip />
      <Toolbar />
      <div className="h-[897px] shrink-0"><Viewport /></div>
      <Taskbar />
    </div>
  );
}
